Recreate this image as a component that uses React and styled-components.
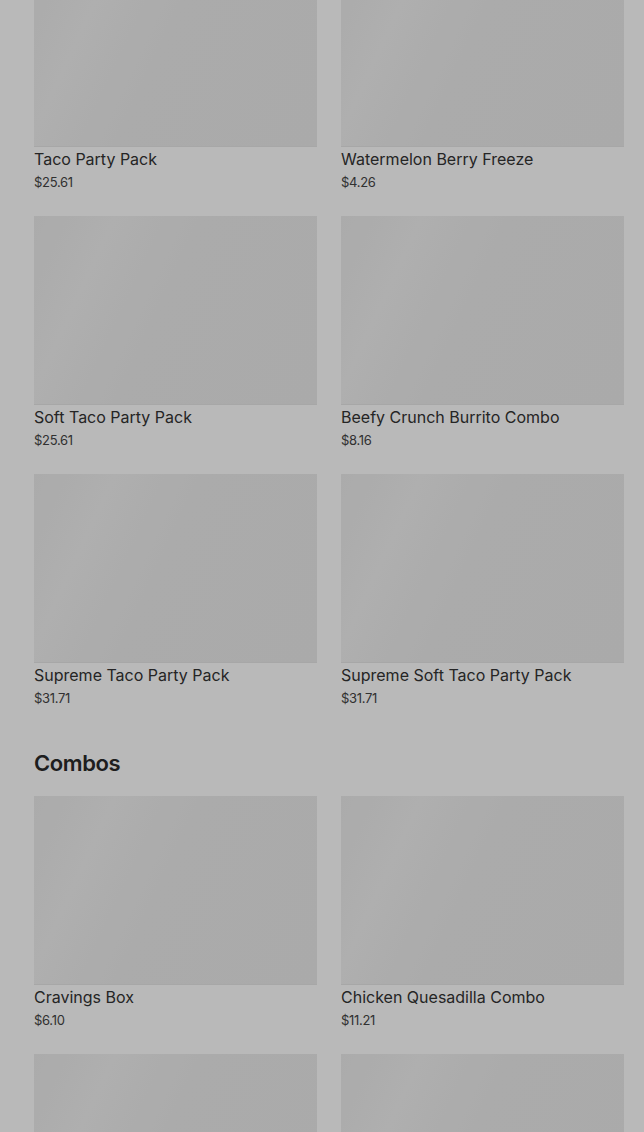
import React from "react"
import styled, { createGlobalStyle } from "styled-components"

const sections = [
  {
    title: null,
    items: [
      { name: "Taco Party Pack", price: "$25.61" },
      { name: "Watermelon Berry Freeze", price: "$4.26" },
      { name: "Soft Taco Party Pack", price: "$25.61" },
      { name: "Beefy Crunch Burrito Combo", price: "$8.16" },
      { name: "Supreme Taco Party Pack", price: "$31.71" },
      { name: "Supreme Soft Taco Party Pack", price: "$31.71" },
    ],
  },
  {
    title: "Combos",
    items: [
      { name: "Cravings Box", price: "$6.10" },
      { name: "Chicken Quesadilla Combo", price: "$11.21" },
      { name: "Crunchwrap Supreme Combo", price: "$8.49" },
      { name: "Burrito Supreme Combo", price: "$8.99" },
    ],
  },
]

export default function App() {
  return (
    <>
      <GlobalStyle />
      <Page>
        {sections.map((section, i) => (
          <Section key={i}>
            {section.title ? <SectionTitle>{section.title}</SectionTitle> : null}
            <Grid>
              {section.items.map(item => (
                <Card key={item.name}>
                  <Placeholder />
                  <ItemName>{item.name}</ItemName>
                  <ItemPrice>{item.price}</ItemPrice>
                </Card>
              ))}
            </Grid>
          </Section>
        ))}
      </Page>
      <Backdrop />
    </>
  )
}

// --- styled components ---

const GlobalStyle = createGlobalStyle`
  html, body {
    margin: 0;
    padding: 0;
    background: #ffffff;
  }
  body {
    height: 1132px;
    overflow: hidden;
    font-family: Inter, "Noto Sans", sans-serif;
    color: #2b2b2b;
  }
`

const Page = styled.main`
  /* scrolled: the top of the first row is out of view */
  margin-top: -42px;
  padding: 0 20px 0 34px;
  display: flex;
  flex-direction: column;
  gap: 42px;
`

const Section = styled.section`
  display: flex;
  flex-direction: column;
`

const SectionTitle = styled.h2`
  margin: 0 0 19px;
  font-size: 22px;
  line-height: 28px;
  font-weight: 600;
  letter-spacing: -0.4px;
  color: #2a2a2a;
`

const Grid = styled.div`
  display: grid;
  grid-template-columns: 283px 283px;
  column-gap: 24px;
  row-gap: 25px;
`

const Card = styled.div`
  display: flex;
  flex-direction: column;
`

const Placeholder = styled.div`
  height: 188px;
  background: linear-gradient(
    115deg,
    #ececec 0%,
    #f1f1f1 22%,
    #ececec 45%,
    #ebebeb 100%
  );
  box-shadow: 0 1px 0 #e6e6e6;
`

const ItemName = styled.div`
  margin-top: 2px;
  font-size: 16px;
  line-height: 22px;
  font-weight: 400;
  color: #333333;
`

const ItemPrice = styled.div`
  margin-top: 3px;
  font-size: 13px;
  line-height: 18px;
  letter-spacing: -0.3px;
  color: #444444;
`

const Backdrop = styled.div`
  position: fixed;
  inset: 0;
  background: rgba(0, 0, 0, 0.275);
`
